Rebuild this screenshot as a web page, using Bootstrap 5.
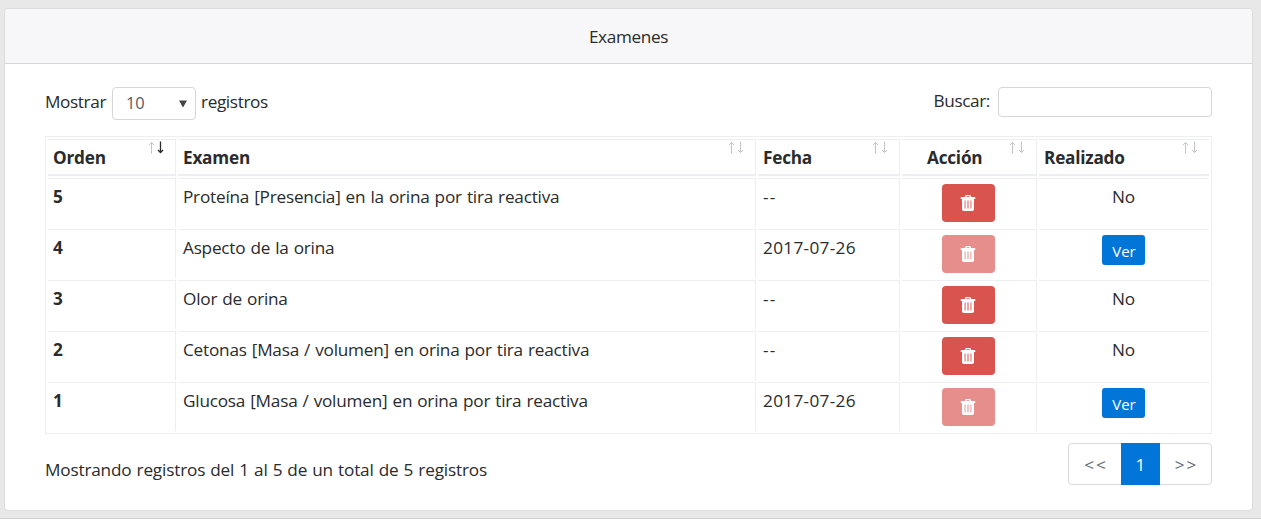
<!DOCTYPE html>
<html lang="es">
<head>
<meta charset="utf-8">
<meta name="viewport" content="width=device-width, initial-scale=1">
<title>Examenes</title>
<link href="https://cdn.jsdelivr.net/npm/bootstrap@5.3.0/dist/css/bootstrap.min.css" rel="stylesheet">
<style>
  body { background: #e8e8e8; color: #292b2c; font: 400 17.2px/26px "Open Sans", "Noto Sans", sans-serif; letter-spacing: -.22px; word-spacing: .8px; height: 519px; overflow: hidden; border-bottom: 1px solid #cfcfcf; }
  .exam-card { --bs-card-border-color: #dcdcdc; --bs-card-border-radius: 4px; margin: 8px 8px 0 4px; height: 503px; color: #292b2c; }
  .exam-card .card-header { height: 55px; background: #f7f7f9; border-bottom-color: #d5d6d8; padding: 15px 0 0; letter-spacing: -.35px; }
  .exam-card .card-body { padding: 23px 40px 0; }
  .tools { height: 49px; white-space: nowrap; }
  .tools label > span:not(.len-select) { padding-bottom: 3px; letter-spacing: -.38px; }
  .tools label > .t-show { width: 61px; }
  .len-select { width: 84px; height: 33px; padding: 0 8px 2px 13px; margin: 0 5px 0 6px; border: 1px solid #d5d6d8; border-radius: 4px; color: #555b60; font-size: 16.4px; }
  .len-select svg { position: relative; top: 1px; }
  .search-box { width: 214px; height: 30px; margin-left: 8px; border: 1px solid #d5d6d8; border-radius: 4px; padding: 0 8px; }
  .exam-table { width: 1167px; height: 298px; table-layout: fixed; border-collapse: separate; border-spacing: 2px; border: 1px solid #eceeef; }
  .exam-table th, .exam-table td { padding: 5px; vertical-align: top; border: 0 solid #eceeef; border-top-width: 1px; border-right-width: 1px; height: 49px; white-space: nowrap; }
  .exam-table thead th { height: 37px; padding-bottom: 3px; border-bottom-width: 2px; }
  .exam-table tr > :last-child { border-right-width: 0; }
  .exam-table td.text-center { padding-right: 7px; }
  .exam-table td.text-center:last-child { padding-right: 6px; }
  .exam-table td:nth-child(3) { letter-spacing: .32px; }
  .exam-table td.no-date { letter-spacing: 1.3px; }
  .exam-table thead th .d-flex { margin-right: 6px; }
  .sort { width: 16px; height: 13px; margin-top: -4px; fill: none; stroke: #c3c4c5; stroke-width: 1; }
  .sort .on { stroke: #292b2c; stroke-width: 1.3; }
  .btn-del { display: inline-flex; align-items: center; justify-content: center; width: 53px; height: 38px; background: #d9534f !important; border: 0; border-radius: 4px; padding: 0 0 1px; vertical-align: top; opacity: 1; }
  .btn-del:disabled { opacity: .65; }
  .btn-ver { width: 43px; height: 30px; background: #0275d8; border: 0; border-radius: 3px; padding: 2px 0 0 1px; font-size: 15px; line-height: 26px; color: #fff; vertical-align: top; }
  .foot { height: 52px; margin-top: 9px; }
  .t-info { padding-top: 14px; letter-spacing: -.18px; }
  .exam-pages { --bs-pagination-color: #636c72; --bs-pagination-border-color: #d9dbdd; --bs-pagination-active-bg: #0275d8; --bs-pagination-active-border-color: #0275d8; --bs-pagination-border-radius: 4px; --bs-pagination-font-size: 17.2px; }
  .exam-pages .page-link { height: 42px; padding: 8px 0 0 2px; line-height: 26px; width: 54px; text-align: center; letter-spacing: 2px; }
  .exam-pages .active .page-link { width: 39px; padding-left: 0; letter-spacing: 0; }
  .exam-pages li:last-child .page-link { width: 53px; }
</style>
</head>
<body>
<svg width="0" height="0" class="d-none">
  <symbol id="updown" viewBox="0 0 16 13"><path d="M3.5 12.5V1.5M1 4L3.5 1.5L6 4"/></symbol>
  <symbol id="downonly" viewBox="0 0 16 13"><path d="M12.5 .5V11.5M10 9L12.5 11.5L15 9"/></symbol>
  <symbol id="trash" viewBox="0 0 16 18"><path fill="#fff" fill-rule="evenodd" d="M4.8 3L5.3 1.6Q5.6 1 6.2 1H9.8Q10.4 1 10.7 1.6L11.2 3H14.6Q15.3 3 15.3 3.7V5H14V15.2Q14 17 12.2 17H3.8Q2 17 2 15.2V5H.7V3.7Q.7 3 1.4 3ZM6.3 3H9.7L9.4 2.2H6.6ZM4.6 6.5V14.5H5.5V6.5ZM7.5 6.5V14.5H8.5V6.5ZM10.5 6.5V14.5H11.4V6.5Z"/></symbol>
</svg>
<main class="card exam-card">
  <div class="card-header text-center">Examenes</div>
  <div class="card-body">
    <div class="tools d-flex justify-content-between align-items-start">
      <label class="d-flex align-items-center">
        <span class="t-show">Mostrar</span>
        <span class="len-select d-inline-flex align-items-center justify-content-between bg-white"><span>10</span><svg width="8" height="8" viewBox="0 0 8 8"><path d="M0 .5H8L4 7.5Z" fill="#444"/></svg></span>
        <span>registros</span>
      </label>
      <label class="d-flex align-items-center"><span>Buscar:</span><input type="text" class="search-box"></label>
    </div>
    <table class="exam-table">
      <colgroup><col style="width:128px"><col style="width:578px"><col style="width:142px"><col style="width:135px"><col style="width:170px"></colgroup>
      <thead>
        <tr>
          <th><div class="d-flex justify-content-between"><span>Orden</span><svg class="sort"><use href="#updown"/><use class="on" href="#downonly"/></svg></div></th>
          <th><div class="d-flex justify-content-between"><span>Examen</span><svg class="sort"><use href="#updown"/><use href="#downonly"/></svg></div></th>
          <th><div class="d-flex justify-content-between"><span>Fecha</span><svg class="sort"><use href="#updown"/><use href="#downonly"/></svg></div></th>
          <th><div class="d-flex justify-content-between"><span class="ps-3 ms-1">Acción</span><svg class="sort"><use href="#updown"/><use href="#downonly"/></svg></div></th>
          <th><div class="d-flex justify-content-between"><span>Realizado</span><svg class="sort"><use href="#updown"/><use href="#downonly"/></svg></div></th>
        </tr>
      </thead>
      <tbody>
        <tr><th>5</th><td>Proteína [Presencia] en la orina por tira reactiva</td><td class="no-date">--</td><td class="text-center"><button class="btn btn-danger btn-del"><svg width="16" height="18"><use href="#trash"/></svg></button></td><td class="text-center">No</td></tr>
        <tr><th>4</th><td>Aspecto de la orina</td><td>2017-07-26</td><td class="text-center"><button class="btn btn-danger btn-del" disabled><svg width="16" height="18"><use href="#trash"/></svg></button></td><td class="text-center"><button class="btn btn-primary btn-ver">Ver</button></td></tr>
        <tr><th>3</th><td>Olor de orina</td><td class="no-date">--</td><td class="text-center"><button class="btn btn-danger btn-del"><svg width="16" height="18"><use href="#trash"/></svg></button></td><td class="text-center">No</td></tr>
        <tr><th>2</th><td>Cetonas [Masa / volumen] en orina por tira reactiva</td><td class="no-date">--</td><td class="text-center"><button class="btn btn-danger btn-del"><svg width="16" height="18"><use href="#trash"/></svg></button></td><td class="text-center">No</td></tr>
        <tr><th>1</th><td>Glucosa [Masa / volumen] en orina por tira reactiva</td><td>2017-07-26</td><td class="text-center"><button class="btn btn-danger btn-del" disabled><svg width="16" height="18"><use href="#trash"/></svg></button></td><td class="text-center"><button class="btn btn-primary btn-ver">Ver</button></td></tr>
      </tbody>
    </table>
    <div class="foot d-flex justify-content-between align-items-start">
      <div class="t-info">Mostrando registros del 1 al 5 de un total de 5 registros</div>
      <ul class="pagination exam-pages mb-0">
        <li class="page-item"><a class="page-link" href="#">&lt;&lt;</a></li>
        <li class="page-item active"><a class="page-link" href="#">1</a></li>
        <li class="page-item"><a class="page-link" href="#">&gt;&gt;</a></li>
      </ul>
    </div>
  </div>
</main>
<script src="https://cdn.jsdelivr.net/npm/bootstrap@5.3.0/dist/js/bootstrap.bundle.min.js"></script>
</body>
</html>
